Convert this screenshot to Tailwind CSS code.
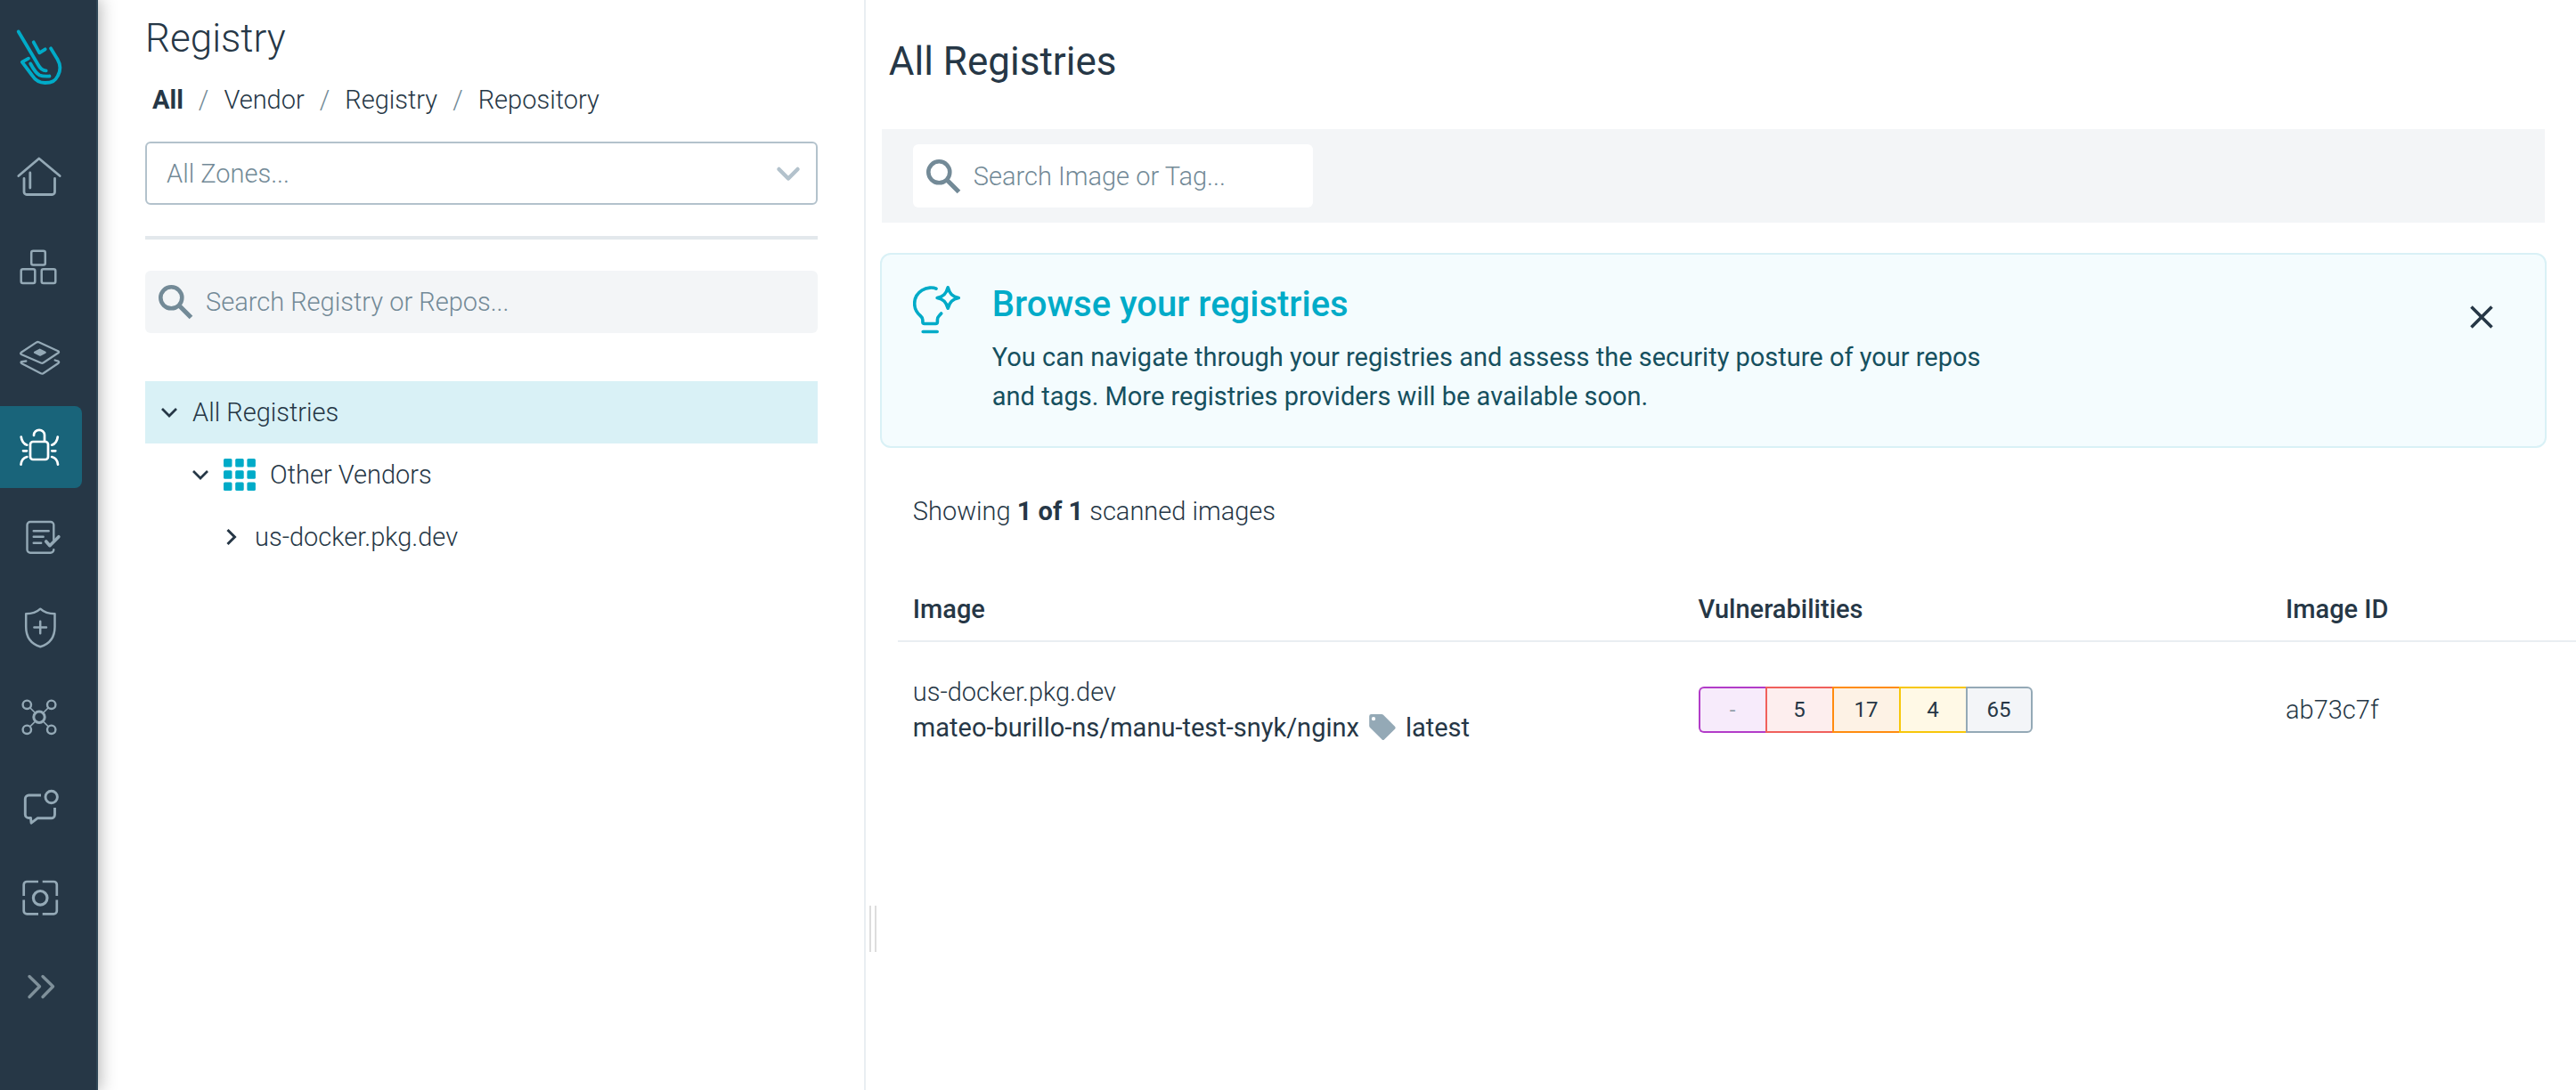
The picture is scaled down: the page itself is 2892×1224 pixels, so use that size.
<!DOCTYPE html>
<html lang="en">
<head>
<meta charset="utf-8">
<meta name="viewport" content="width=device-width, initial-scale=1">
<title>Registry</title>
<script src="https://cdn.jsdelivr.net/npm/@tailwindcss/browser@4"></script>
</head>
<body class="bg-white font-['Roboto',sans-serif] text-[29px] leading-[36px] font-light text-[#263746]">
<div class="flex min-h-screen">

  <!-- Main navigation -->
  <nav aria-label="Main" class="z-10 flex w-[110px] shrink-0 flex-col border-r-2 border-[#2f4656] bg-[#263746] text-[#94a9b6] shadow-[0_0_18px_2px_rgba(0,0,0,0.3)]">
    <a href="#" aria-label="Sysdig" class="h-[153px] text-[#00abc8]">
      <svg class="h-[110px] w-[92px]" viewBox="0 0 92 110" fill="none" stroke="currentColor" stroke-width="3.8" stroke-linecap="round" stroke-linejoin="round"><path d="M20.7 35.5 43 73c2.5 4.500 5 6.500 8.700 6.300M37.700 47.300l6.600 12 6.400-4M57 54.300l7.500 12.200c3.500 6 4 12 .5 18.500-3 6-6.500 8-14.500 8-7 0-11-3-14.500-8.500L24.800 69.700l7.200-4M34.200 71.500c3.500 6.500 6.300 11 10.300 13 3.500 1.500 7 1.200 11 1"/></svg>
    </a>
    <ul class="flex flex-col gap-[9px]">
      <li><a href="#" aria-label="Home" class="block size-[92px]"><svg viewBox="0 0 92 92" fill="none" stroke="currentColor" stroke-width="2.8" stroke-linecap="round" stroke-linejoin="round"><path d="M20.800 44.500 43.800 25l23.400 19.500M27 47.500v15a3 3 0 0 0 3 3h28.500a3 3 0 0 0 3-3v-15M33.800 41v17"/></svg></a></li>
      <li><a href="#" aria-label="Inventory" class="block size-[92px]"><svg viewBox="0 0 92 92" fill="none" stroke="currentColor" stroke-width="2.5"><rect x="35.200" y="27.700" width="15.600" height="15.800" rx="2"/><rect x="23.700" y="48.200" width="15.600" height="15.800" rx="2"/><rect x="46.700" y="48.200" width="15.600" height="15.800" rx="2"/></svg></a></li>
      <li><a href="#" aria-label="Posture" class="block size-[92px]"><svg viewBox="0 0 92 92" fill="none" stroke="currentColor" stroke-width="2.300" stroke-linecap="round" stroke-linejoin="round"><path d="M41 29.400q1.300-.7 2.600-.1l21.600 10q1.600.9.2 2l-16.600 11q-1.400.9-2.900.2L24 43q-1.700-1-.2-2.200zM29.300 50.500l-5 .6q-1.400.7-.2 1.800l21.700 11.400q1.400.7 2.800-.1L65.300 53q1.700-1.300.2-2.300l-3.800-1.200"/><path d="m39 40.700 5.700-3 6 3-5.700 3z" fill="currentColor"/></svg></a></li>
      <li><a href="#" aria-label="Vulnerabilities" aria-current="page" class="block size-[92px] rounded-r-lg bg-[#19647a] text-white"><svg viewBox="0 0 92 92" fill="none" stroke="currentColor" stroke-width="2.700" stroke-linecap="round" stroke-linejoin="round"><rect x="34" y="40" width="20" height="20" rx="3"/><path d="M38 33v-.5a6 5.600 0 0 1 12 0V39M23.700 34.500c.6 4.500 2.800 8 6.600 9.200M26 50.300h4M30.300 57c-3.500.8-6.300 4-6.800 8.700M64.800 34.500c-.6 4.500-2.800 8-6.600 9.200M58.300 50.300h4M58.200 57c3.500.8 6.300 4 6.800 8.700"/></svg></a></li>
      <li><a href="#" aria-label="Compliance" class="block size-[92px]"><svg viewBox="0 0 92 92" fill="none" stroke="currentColor" stroke-width="2.400" stroke-linecap="round" stroke-linejoin="round"><path d="M60.300 49V32.500a3.500 3.500 0 0 0-3.500-3.500H34a3.500 3.500 0 0 0-3.500 3.500v27.700a3.500 3.500 0 0 0 3.500 3.500h22.800a3.500 3.500 0 0 0 3.500-3.500M37.700 39.300h17M37.700 45.700h11M37.700 52.700h8.500"/><path stroke-width="3.600" d="m51.700 51 4.200 4.700 10-10"/></svg></a></li>
      <li><a href="#" aria-label="Policies" class="block size-[92px]"><svg viewBox="0 0 92 92" fill="none" stroke="currentColor" stroke-width="2.500" stroke-linecap="round" stroke-linejoin="round"><path d="M45.300 25.700c-4 3.800-9.800 5.600-16.100 5.600V46c0 11 5.500 19 16.100 22.300C56 65 61.500 57 61.500 46V31.300c-6.300 0-12.200-1.800-16.200-5.600zM45.200 39.700v13.600M38.400 46.500H52"/></svg></a></li>
      <li><a href="#" aria-label="Network" class="block size-[92px]"><svg viewBox="0 0 92 92" fill="none" stroke="currentColor"><g stroke-width="2.400"><circle cx="30.300" cy="32.300" r="4.700"/><circle cx="57.700" cy="32.300" r="4.700"/><circle cx="30.300" cy="60.300" r="4.700"/><circle cx="57.700" cy="60.300" r="4.700"/></g><circle cx="44" cy="46.300" r="6.200" stroke-width="3"/><path stroke-width="1.600" d="m34 36 5 5M54 36l-5 5M34 56.600l5-5M54 56.600l-5-5"/></svg></a></li>
      <li><a href="#" aria-label="Events" class="block size-[92px]"><svg viewBox="0 0 92 92" fill="none" stroke="currentColor" stroke-width="2.900" stroke-linejoin="round"><path d="M46 33H32.300a4 4 0 0 0-4 4v17.500a4 4 0 0 0 4 4h2.200l.6 5.700 6.900-5.400h15.500a4 4 0 0 0 4-4V47"/><circle cx="57.700" cy="35" r="6.700"/></svg></a></li>
      <li><a href="#" aria-label="Captures" class="block size-[92px]"><svg viewBox="0 0 92 92" fill="none" stroke="currentColor" stroke-width="2.700"><path d="M43 29H30.200a3.500 3.500 0 0 0-3.500 3.500V45M47.700 29h12.600a3.500 3.500 0 0 1 3.500 3.500V45M43 65.400H30.200a3.500 3.500 0 0 1-3.500-3.500V49.400M47.700 65.400h12.600a3.500 3.500 0 0 0 3.500-3.500V49.400"/><circle cx="45.200" cy="47.300" r="7.800" stroke-width="3.200"/></svg></a></li>
      <li><button type="button" aria-label="Expand menu" class="block size-[92px] text-[#7f909a]"><svg viewBox="0 0 92 92" fill="none" stroke="currentColor" stroke-width="3.400" stroke-linecap="round" stroke-linejoin="round"><path d="m33 34.500 11.500 11.200L33 57.500M48 34.500l11.500 11.200L48 57.500"/></svg></button></li>
    </ul>
  </nav>

  <!-- Registry tree -->
  <aside class="w-[29.8%] shrink-0 border-r-2 border-[#e9eef2] pt-[17px] pr-[52px] pl-[53px]">
    <h1 class="text-[44px] leading-[52px]">Registry</h1>
    <nav aria-label="Breadcrumb" class="mt-[25px] pl-2">
      <ol class="flex gap-[17px]">
        <li><a href="#" class="font-bold">All</a></li>
        <li aria-hidden="true" class="text-[#738a97]">/</li>
        <li><a href="#">Vendor</a></li>
        <li aria-hidden="true" class="text-[#738a97]">/</li>
        <li><a href="#">Registry</a></li>
        <li aria-hidden="true" class="text-[#738a97]">/</li>
        <li><a href="#">Repository</a></li>
      </ol>
    </nav>
    <div class="relative mt-[29px] text-[#738a97]">
      <select aria-label="Zones" class="block h-[71px] w-full appearance-none rounded-md border-2 border-[#b3c2cc] bg-white px-[22px]">
        <option>All Zones...</option>
      </select>
      <svg class="pointer-events-none absolute top-[26px] right-[18px] h-[20px] w-[30px] text-[#b3c2cc]" viewBox="0 0 30 20" fill="none" stroke="currentColor" stroke-width="4.500" stroke-linecap="round" stroke-linejoin="round"><path d="m4.500 5 10.500 10.500L25.500 5"/></svg>
    </div>
    <hr class="mt-[35px] border-t-4 border-[#e3e8ec]">
    <label class="mt-[35px] flex h-[70px] items-center gap-[14px] rounded-md bg-[#f3f5f7] pl-[14px] text-[#738a97]">
      <svg class="size-[40px] shrink-0" viewBox="0 0 40 40" fill="none" stroke="currentColor" stroke-width="4.600"><circle cx="15.300" cy="15.300" r="12"/><path d="M24 24l13.500 13.500" stroke-width="5.200"/></svg>
      <input type="text" aria-label="Search registry or repos" placeholder="Search Registry or Repos..." class="min-w-0 flex-1 outline-none placeholder:text-[#738a97]">
    </label>
    <ul class="mt-[54px]">
      <li>
        <button type="button" class="flex h-[70px] w-full items-center gap-[16px] bg-[#d9f1f6] pl-[17px]">
          <svg class="size-[20px]" viewBox="0 0 20 20" fill="none" stroke="currentColor" stroke-width="2.700"><path d="m2 6 8 8 8-8"/></svg>
          <span>All Registries</span>
        </button>
        <ul>
          <li>
            <button type="button" class="flex h-[70px] w-full items-center gap-[16px] pl-[52px]">
              <svg class="size-[20px]" viewBox="0 0 20 20" fill="none" stroke="currentColor" stroke-width="2.700"><path d="m2 6 8 8 8-8"/></svg>
              <svg class="size-[36px] text-[#00abc8]" viewBox="0 0 36 36" fill="currentColor"><rect width="9.500" height="9.500" rx="1.500"/><rect x="13.200" width="9.500" height="9.500" rx="1.500"/><rect x="26.400" width="9.500" height="9.500" rx="1.500"/><rect y="13.200" width="9.500" height="9.500" rx="1.500"/><rect x="13.200" y="13.200" width="9.500" height="9.500" rx="1.500"/><rect x="26.400" y="13.200" width="9.500" height="9.500" rx="1.500"/><rect y="26.400" width="9.500" height="9.500" rx="1.500"/><rect x="13.200" y="26.400" width="9.500" height="9.500" rx="1.500"/><rect x="26.400" y="26.400" width="9.500" height="9.500" rx="1.500"/></svg>
              <span>Other Vendors</span>
            </button>
            <ul>
              <li>
                <button type="button" class="flex h-[70px] w-full items-center gap-[16px] pl-[87px]">
                  <svg class="size-[20px]" viewBox="0 0 20 20" fill="none" stroke="currentColor" stroke-width="3"><path d="m5.500 2 8 8-8 8"/></svg>
                  <span>us-docker.pkg.dev</span>
                </button>
              </li>
            </ul>
          </li>
        </ul>
      </li>
    </ul>
  </aside>

  <!-- Pane resizer -->
  <div role="separator" aria-orientation="vertical" class="flex w-[16px] shrink-0 cursor-col-resize items-end justify-center pb-[155px]">
    <span class="h-[52px] w-[8px] border-x-2 border-[#dddddd]"></span>
  </div>

  <!-- Scanned images -->
  <main class="min-w-0 flex-1 pt-[43px]">
    <h2 class="pl-[10px] text-[44px] leading-[52px] font-normal">All Registries</h2>
    <div class="mt-[50px] mr-[35px] ml-[2px] bg-[#f3f5f7] px-[35px] py-[17px]">
      <label class="flex h-[71px] w-full max-w-[449px] items-center gap-[14px] rounded-md bg-white pl-[14px] text-[#738a97]">
        <svg class="size-[40px] shrink-0" viewBox="0 0 40 40" fill="none" stroke="currentColor" stroke-width="4.600"><circle cx="15.300" cy="15.300" r="12"/><path d="M24 24l13.500 13.500" stroke-width="5.200"/></svg>
        <input type="text" aria-label="Search image or tag" placeholder="Search Image or Tag..." class="min-w-0 flex-1 outline-none placeholder:text-[#738a97]">
      </label>
    </div>
    <section class="mt-[34px] mr-[33px] flex items-start rounded-xl border-2 border-[#d9f1f6] bg-[#f4fcfe] pt-[32px] pr-[58px] pb-[34px] pl-[35px]">
      <svg class="mt-[3px] h-[54px] w-[54px] shrink-0 text-[#00abc8]" viewBox="0 0 54 54" fill="none" stroke="currentColor" stroke-width="3.600" stroke-linecap="round" stroke-linejoin="round"><path d="M26 3.200C22.500 1.500 16 1.400 10 5 4.500 8.500 1.700 14 1.700 20c0 6.500 3 10.700 7 14 1.700 1.400 2.200 2.500 2.200 4.500v2a2 2 0 0 0 2 2h12.500a2 2 0 0 0 2-2v-2.500c0-1.700.5-3 2-4.500l2.300-2.500M11.200 51.500h16M39.200 1.800c2 7.200 5 10.200 12 11.700-7 1.500-10 4.500-12 11.700-2-7.200-5-10.200-12-11.700 7-1.500 10-4.500 12-11.700z"/></svg>
      <div class="ml-[35px] max-w-[1120px] flex-1">
        <h3 class="text-[40px] leading-[48px] font-medium text-[#00abc8]">Browse your registries</h3>
        <p class="mt-[13px] leading-[44px] font-normal text-[#16505f]">You can navigate through your registries and assess the security posture of your repos and tags. More registries providers will be available soon.</p>
      </div>
      <button type="button" aria-label="Close" class="mt-[25px] ml-auto">
        <svg class="size-[26px]" viewBox="0 0 26 26" fill="none" stroke="currentColor" stroke-width="3.600"><path d="m1.500 1.500 23 23M24.500 1.500l-23 23"/></svg>
      </button>
    </section>
    <p class="mt-[53px] pl-[37px]">Showing <b class="font-bold">1 of 1</b> scanned images</p>
    <div class="mt-[56px] pl-[20px]">
      <table class="w-full table-fixed border-collapse text-left">
        <thead>
          <tr class="h-[72px] border-b-2 border-[#e9eef2]">
            <th scope="col" class="w-[46.8%] pl-[17px] font-medium">Image</th>
            <th scope="col" class="w-[35%] pl-[17px] font-medium">Vulnerabilities</th>
            <th scope="col" class="pl-[17px] font-medium">Image ID</th>
          </tr>
        </thead>
        <tbody>
          <tr>
            <td class="pt-[36px] pl-[17px] leading-[40px]">
              <div>us-docker.pkg.dev</div>
              <a href="#" class="flex items-center gap-[10px] font-normal">
                <span>mateo-burillo-ns/manu-test-snyk/nginx</span>
                <svg class="size-[32px] text-[#94a9b6]" viewBox="0 0 32 32"><path fill="currentColor" fill-rule="evenodd" d="M3.500 1h11.500q1.200 0 2 .8L30.200 15q1 1.200 0 2.400L18 29.500q-1.200 1-2.400 0L2 16q-.8-.8-.8-2V3.300Q1.200 1 3.500 1zM6 3.900a2.200 2.200 0 1 0 0 4.400 2.200 2.200 0 0 0 0-4.400z"/></svg>
                <span>latest</span>
              </a>
            </td>
            <td class="pt-[36px] pl-[17px]">
              <ul class="flex text-center text-[24px] leading-[48px] font-normal">
                <li class="w-[75px] rounded-l-md border-2 border-r-0 border-[#b23cc8] bg-[#f7ebfb] text-[#94a0ab]">-</li>
                <li class="w-[75px] border-2 border-r-0 border-[#f0605c] bg-[#fdeeee]">5</li>
                <li class="w-[75px] border-2 border-r-0 border-[#ff8c0f] bg-[#fdf2e5]">17</li>
                <li class="w-[75px] border-2 border-r-0 border-[#f7c70a] bg-[#fff9e6]">4</li>
                <li class="w-[75px] rounded-r-md border-2 border-[#94a9b6] bg-[#f3f5f8]">65</li>
              </ul>
            </td>
            <td class="pt-[36px] pl-[17px]">ab73c7f</td>
          </tr>
        </tbody>
      </table>
    </div>
  </main>
</div>
</body>
</html>
